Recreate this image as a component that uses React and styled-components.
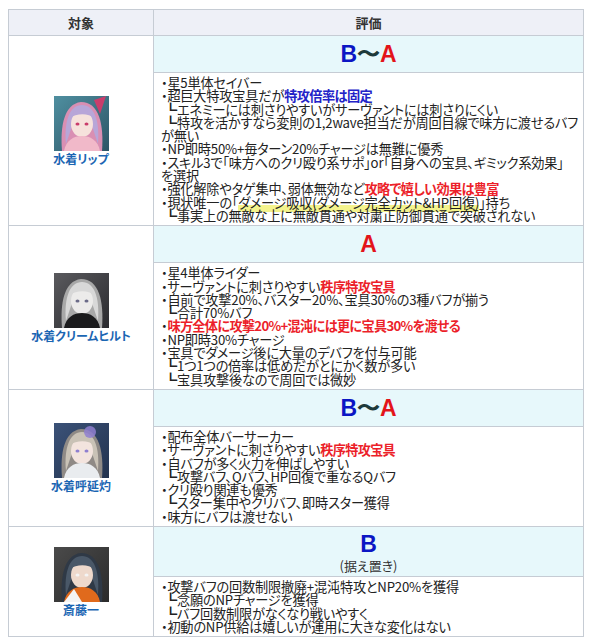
import React from "react";
import styled, { createGlobalStyle } from "styled-components";

const Global = createGlobalStyle`
  body {
    margin: 8px;
    background: #ffffff;
    font-family: "Noto Sans CJK JP", "Noto Sans", sans-serif;
    color: #222;
  }
`;

const Table = styled.table`
  border-collapse: collapse;
  width: 576px;
  margin-top: 1px;
  table-layout: fixed;
`;

const HeadCell = styled.th`
  background: #eef0f7;
  border: 1px solid #c6ccd4;
  height: 25px;
  padding: 0;
  font-size: 13px;
  font-weight: 700;
  color: #333;
  text-align: center;
  vertical-align: middle;
  width: ${(p) => p.$w || "auto"};
`;

const TargetCell = styled.td`
  border: 1px solid #c6ccd4;
  text-align: center;
  vertical-align: middle;
  padding: 0;
  background: #fff;
`;

const TargetBox = styled.div`
  display: flex;
  flex-direction: column;
  align-items: center;
`;

const Name = styled.div`
  font-size: 12px;
  font-weight: 700;
  color: #1b66b3;
  line-height: 13px;
  margin-top: 1px;
  white-space: nowrap;
  font-feature-settings: "palt";
`;

const GradeCell = styled.td`
  border: 1px solid #c6ccd4;
  background: #e7f8fb;
  text-align: center;
  vertical-align: middle;
  padding: ${(p) => (p.$sub ? "4px 0 3px" : "5px 0 4px")};
`;

const GradeLine = styled.div`
  font-family: "Liberation Sans", Arial, sans-serif;
  font-weight: 700;
  font-size: 23px;
  line-height: 27px;
`;

const GB = styled.span`
  color: #0c16c4;
`;
const GT = styled.span`
  color: #1e3a3a;
`;
const GA = styled.span`
  color: #e3141a;
`;

const GradeSub = styled.div`
  font-size: 13px;
  line-height: 15px;
  color: #333;
  font-feature-settings: "palt";
`;

const TextCell = styled.td`
  border: 1px solid #c6ccd4;
  padding: 3px 0 3px 0;
  vertical-align: top;
  background: #fff;
`;

const Line = styled.div`
  font-size: 13.2px;
  line-height: 13.3px;
  white-space: nowrap;
  font-feature-settings: "palt";
  letter-spacing: -0.2px;
  color: #222;
  padding-left: ${(p) => (p.$indent ? "10px" : "7px")};
`;

const Blue = styled.b`
  color: #2323c8;
  font-weight: 700;
  letter-spacing: -0.6px;
`;
const Red = styled.b`
  color: #ec1f2a;
  font-weight: 700;
  letter-spacing: -0.7px;
`;
const Mark = styled.span`
  background: linear-gradient(transparent 62%, #f4f38c 62%);
`;

const palettes = {
  lip: { bg1: "#4f8fa0", bg2: "#2d5566", hair: "#b8a6d8", hair2: "#d98fb3", skin: "#f6e2dc", body: "#f1b9c9", acc: "#c93d6b" },
  kriem: { bg1: "#5a5a5e", bg2: "#2a2a2e", hair: "#d8d8d8", hair2: "#a8a8a8", skin: "#ecebea", body: "#1b1b1d", acc: "#6b6b88" },
  koen: { bg1: "#3b5278", bg2: "#22324e", hair: "#c9c2b6", hair2: "#8f8a86", skin: "#f3e4de", body: "#e9ecef", acc: "#8f7fd0" },
  saito: { bg1: "#4a4a4a", bg2: "#2b2b2b", hair: "#4a5868", hair2: "#2f3946", skin: "#eed9cc", body: "#e06a1c", acc: "#f4f4f4" },
};

function Portrait({ kind }) {
  const c = palettes[kind];
  const id = `g-${kind}`;
  return (
    <svg width="55" height="55" viewBox="0 0 55 55">
      <defs>
        <linearGradient id={id} x1="0" y1="0" x2="1" y2="1">
          <stop offset="0" stopColor={c.bg1} />
          <stop offset="1" stopColor={c.bg2} />
        </linearGradient>
      </defs>
      <rect width="55" height="55" fill={`url(#${id})`} />
      <path d="M8 55 C6 30 10 8 27 6 C45 6 50 28 48 55 Z" fill={c.hair2} />
      <path d="M12 48 C10 24 16 9 28 9 C40 9 46 24 44 48 L38 30 L18 30 Z" fill={c.hair} />
      <ellipse cx="28" cy="28" rx="11" ry="13" fill={c.skin} />
      <path d="M16 22 C18 12 38 12 40 22 C35 17 22 17 16 22 Z" fill={c.hair} />
      <ellipse cx="23.5" cy="28" rx="2" ry="1.6" fill={c.acc} />
      <ellipse cx="32.5" cy="28" rx="2" ry="1.6" fill={c.acc} />
      <path d="M10 55 C12 44 20 40 28 40 C36 40 44 44 46 55 Z" fill={c.body} />
      {kind === "koen" && <circle cx="36" cy="9" r="6" fill={c.acc} opacity="0.85" />}
      {kind === "lip" && <path d="M40 4 L52 0 L46 18 Z" fill={c.acc} />}
      {kind === "saito" && <path d="M10 55 L20 42 L28 55 Z" fill={c.acc} />}
    </svg>
  );
}

const rows = [
  {
    name: "水着リップ",
    kind: "lip",
    grade: "BA",
    lines: [
      ["・星5単体セイバー"],
      ["・超巨大特攻宝具だが", { b: "特攻倍率は固定" }],
      ["┗エネミーには刺さりやすいがサーヴァントには刺さりにくい", "i"],
      ["┗特攻を活かすなら変則の1,2wave担当だが周回目線で味方に渡せるバフ", "i"],
      ["が無い"],
      ["・NP即時50%+毎ターン20%チャージは無難に優秀"],
      ["・スキル3で「味方へのクリ殴り系サポ」or「自身への宝具、ギミック系効果」"],
      ["を選択"],
      ["・強化解除やタゲ集中、弱体無効など", { r: "攻略で嬉しい効果は豊富" }],
      ["・現状唯一の「", { m: "ダメージ吸収(ダメージ完全カット&HP回復)" }, "」持ち"],
      ["┗事実上の無敵な上に無敵貫通や対粛正防御貫通で突破されない", "i"],
    ],
  },
  {
    name: "水着クリームヒルト",
    kind: "kriem",
    grade: "A",
    lines: [
      ["・星4単体ライダー"],
      ["・サーヴァントに刺さりやすい", { r: "秩序特攻宝具" }],
      ["・自前で攻撃20%、バスター20%、宝具30%の3種バフが揃う"],
      ["┗合計70%バフ", "i"],
      ["・", { r: "味方全体に攻撃20%+混沌には更に宝具30%を渡せる" }],
      ["・NP即時30%チャージ"],
      ["・宝具でダメージ後に大量のデバフを付与可能"],
      ["┗1つ1つの倍率は低めだがとにかく数が多い", "i"],
      ["┗宝具攻撃後なので周回では微妙", "i"],
    ],
  },
  {
    name: "水着呼延灼",
    kind: "koen",
    grade: "BA",
    lines: [
      ["・配布全体バーサーカー"],
      ["・サーヴァントに刺さりやすい", { r: "秩序特攻宝具" }],
      ["・自バフが多く火力を伸ばしやすい"],
      ["┗攻撃バフ、Qバフ、HP回復で重なるQバフ", "i"],
      ["・クリ殴り関連も優秀"],
      ["┗スター集中やクリバフ、即時スター獲得", "i"],
      ["・味方にバフは渡せない"],
    ],
  },
  {
    name: "斎藤一",
    kind: "saito",
    grade: "B",
    sub: "(据え置き)",
    lines: [
      ["・攻撃バフの回数制限撤廃+混沌特攻とNP20%を獲得"],
      ["┗念願のNPチャージを獲得", "i"],
      ["┗バフ回数制限がなくなり戦いやすく", "i"],
      ["・初動のNP供給は嬉しいが運用に大きな変化はない"],
    ],
  },
];

function Grade({ g }) {
  if (g === "BA")
    return (
      <GradeLine>
        <GB>B</GB>
        <GT>〜</GT>
        <GA>A</GA>
      </GradeLine>
    );
  if (g === "A")
    return (
      <GradeLine>
        <GA>A</GA>
      </GradeLine>
    );
  return (
    <GradeLine>
      <GB>B</GB>
    </GradeLine>
  );
}

function TextLine({ parts }) {
  const indent = parts.includes("i");
  return (
    <Line $indent={indent}>
      {parts.map((p, i) => {
        if (p === "i") return null;
        if (typeof p === "string") return <React.Fragment key={i}>{p}</React.Fragment>;
        if (p.b) return <Blue key={i}>{p.b}</Blue>;
        if (p.r) return <Red key={i}>{p.r}</Red>;
        if (p.m) return <Mark key={i}>{p.m}</Mark>;
        return null;
      })}
    </Line>
  );
}

export default function App() {
  return (
    <>
      <Global />
      <Table>
        <thead>
          <tr>
            <HeadCell $w="144px">対象</HeadCell>
            <HeadCell>評価</HeadCell>
          </tr>
        </thead>
        <tbody>
          {rows.map((r) => (
            <React.Fragment key={r.name}>
              <tr>
                <TargetCell rowSpan={2}>
                  <TargetBox>
                    <Portrait kind={r.kind} />
                    <Name>{r.name}</Name>
                  </TargetBox>
                </TargetCell>
                <GradeCell $sub={!!r.sub}>
                  <Grade g={r.grade} />
                  {r.sub && <GradeSub>{r.sub}</GradeSub>}
                </GradeCell>
              </tr>
              <tr>
                <TextCell>
                  {r.lines.map((l, i) => (
                    <TextLine key={i} parts={l} />
                  ))}
                </TextCell>
              </tr>
            </React.Fragment>
          ))}
        </tbody>
      </Table>
    </>
  );
}
